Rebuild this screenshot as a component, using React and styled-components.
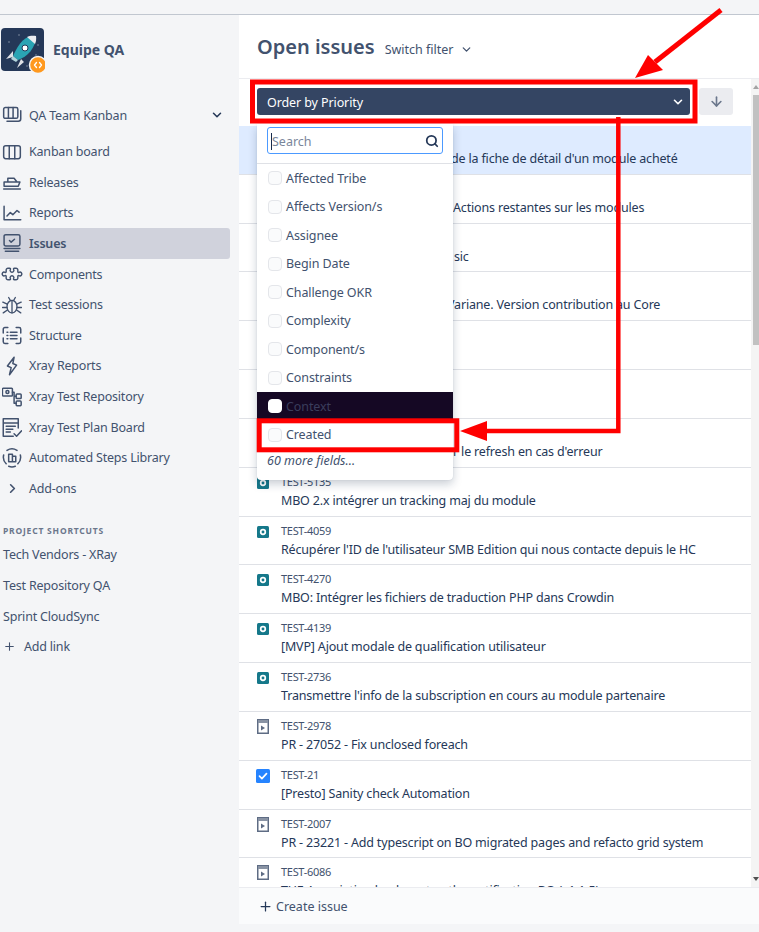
import React from 'react';
import styled, { createGlobalStyle } from 'styled-components';
import { ChevronDown, ChevronRight, ArrowDown, Plus, Search, Puzzle } from 'lucide-react';

const GlobalStyle = createGlobalStyle`
  html, body {
    margin: 0;
    padding: 0;
    background: #f4f5f7;
    font-family: "Noto Sans", "Open Sans", sans-serif;
    color: #172b4d;
  }
  * { box-sizing: border-box; }
`;

const Page = styled.div`
  position: relative;
  width: 759px;
  height: 932px;
  overflow: hidden;
  background: #f4f5f7;
`;

const TopStrip = styled.div`
  height: 15px;
  border-bottom: 1px solid #c1c7d0;
`;

const Columns = styled.div`
  display: grid;
  grid-template-columns: 239px 520px;
  height: 917px;
`;

const Sidebar = styled.aside`
  display: flex;
  flex-direction: column;
  padding-top: 14px;
  color: #42526e;
`;

const ProjectHead = styled.div`
  display: flex;
  align-items: center;
  gap: 8px;
  padding-left: 1px;
  height: 43px;
  margin-bottom: 28px;
`;

const ProjectName = styled.div`
  font-size: 14px;
  font-weight: 700;
  color: #42526e;
  padding-bottom: 2px;
`;

const NavItem = styled.div`
  display: flex;
  align-items: center;
  height: 30.6px;
  width: 230px;
  padding-left: 2px;
  font-size: 12.5px;
  letter-spacing: -0.2px;
  border-radius: 0 3px 3px 0;
  font-weight: ${p => (p.$active ? 600 : 400)};
  background: ${p => (p.$active ? '#d0d2dc' : 'transparent')};
  margin-bottom: ${p => (p.$switcher ? '5.8px' : 0)};
`;

const NavIcon = styled.span`
  display: flex;
  justify-content: center;
  align-items: center;
  width: 20px;
  margin-right: 7px;
  color: #42526e;
  flex: none;
`;

const TiltedPuzzle = styled(Puzzle)`
  transform: rotate(45deg);
`;

const NavLabel = styled.span`
  flex: 1;
`;

const NavCaret = styled.span`
  display: flex;
  margin-right: 6px;
  color: #253858;
`;

const ShortcutTitle = styled.div`
  margin: 21px 0 3px 3px;
  height: 12px;
  line-height: 12px;
  font-size: 8.5px;
  font-weight: 700;
  letter-spacing: 0.8px;
  color: #6b778c;
`;

const ShortcutLink = styled.div`
  display: flex;
  align-items: center;
  height: 30.7px;
  padding-left: 3px;
  font-size: 12.5px;
  letter-spacing: -0.2px;
`;

const AddIcon = styled.span`
  display: flex;
  width: 21px;
  color: #42526e;
`;

const Main = styled.main`
  display: flex;
  flex-direction: column;
  background: #fff;
  height: 909px;
`;

const TitleBar = styled.div`
  display: flex;
  align-items: baseline;
  gap: 10px;
  height: 64px;
  padding: 19px 0 0 18px;
  border-bottom: 1px solid #ebecf0;
  flex: none;
`;

const Title = styled.h1`
  margin: 0;
  font-size: 20px;
  line-height: 26px;
  font-weight: 600;
  letter-spacing: 0;
  color: #42526e;
`;

const FilterSwitch = styled.div`
  display: flex;
  align-items: center;
  gap: 6px;
  font-size: 12.5px;
  color: #42526e;
`;

const Body = styled.div`
  flex: 1;
  min-height: 0;
  display: flex;
`;

const ListColumn = styled.div`
  position: relative;
  flex: 1;
  min-width: 0;
  overflow: hidden;
`;

const Toolbar = styled.div`
  display: flex;
  gap: 9px;
  padding: 9px 18px 0;
  height: 47px;
`;

const OrderSelect = styled.div`
  flex: 1;
  display: flex;
  align-items: center;
  justify-content: space-between;
  height: 27px;
  padding: 1px 5px 0 10px;
  border-radius: 3px;
  background: #344563;
  color: #fff;
  font-size: 12.5px;
  letter-spacing: -0.1px;
`;

const SortButton = styled.div`
  display: flex;
  align-items: center;
  justify-content: center;
  width: 34px;
  height: 27px;
  border-radius: 3px;
  background: #ebecf0;
  color: #6b778c;
`;

const IssueRow = styled.div`
  display: flex;
  height: 48.83px;
  padding: 6px 0 0 18px;
  border-bottom: 1px solid #dfe1e6;
  background: ${p => (p.$selected ? '#deebff' : '#fff')};
`;

const IssueIcon = styled.span`
  display: flex;
  align-items: flex-start;
  width: 24px;
  flex: none;
  padding-top: ${p => p.$top}px;
  margin-left: ${p => (p.$type === 'task' ? -1 : 0)}px;
  margin-right: ${p => (p.$type === 'task' ? 1 : 0)}px;
`;

const IssueText = styled.div`
  min-width: 0;
  white-space: nowrap;
`;

const IssueKey = styled.div`
  font-size: 11px;
  line-height: 16px;
  letter-spacing: -0.3px;
  height: 16px;
  color: #42526e;
`;

const IssueSummary = styled.div`
  font-size: 12.5px;
  line-height: 20px;
  letter-spacing: -0.17px;
  margin-top: 1px;
  margin-left: ${p => p.$indent || 0}px;
  color: #253858;
`;

const FieldMenu = styled.div`
  position: absolute;
  left: 18px;
  top: 45px;
  width: 196px;
  height: 356px;
  background: #fff;
  border-radius: 0 0 4px 4px;
  box-shadow: 0 4px 10px rgba(9, 30, 66, 0.22), 0 0 1px rgba(9, 30, 66, 0.2);
`;

const SearchArea = styled.div`
  height: 40px;
  padding: 3px 10px 0;
  border-bottom: 1px solid #dfe1e6;
`;

const SearchBox = styled.div`
  display: flex;
  align-items: center;
  justify-content: space-between;
  height: 27px;
  padding: 1px 3px 0;
  border: 1px solid #4c9aff;
  border-radius: 3px;
  font-size: 12.5px;
  color: #7a869a;
`;

const Placeholder = styled.span`
  border-left: 1px solid #172b4d;
`;

const FieldOption = styled.div`
  display: flex;
  align-items: center;
  gap: 4px;
  height: 28.5px;
  padding-left: 11px;
  font-size: 12.5px;
  letter-spacing: -0.1px;
  color: ${p => (p.$focused ? '#3a3d5c' : '#42526e')};
  background: ${p => (p.$focused ? '#150824' : 'transparent')};
`;

const Checkbox = styled.span`
  width: 14px;
  height: 14px;
  border-radius: 4px;
  flex: none;
  border: 1px solid ${p => (p.$focused ? '#fff' : '#e4e6ea')};
  background: ${p => (p.$focused ? '#fff' : '#fafbfc')};
`;

const MoreFields = styled.div`
  padding: 3px 0 0 10px;
  font-size: 12.5px;
  font-style: italic;
  color: #42526e;
`;

const Scrollbar = styled.div`
  position: relative;
  width: 8px;
  flex: none;
  background: #f4f4f4;
`;

const ScrollThumb = styled.div`
  margin: 16px 0 0 2px;
  height: 250px;
  background: #c1c1c1;
`;

const ScrollArrow = styled.span`
  position: absolute;
  right: 0;
  width: 0;
  height: 0;
  border-left: 3px solid transparent;
  border-right: 3px solid transparent;
  ${p => (p.$up
    ? 'top: 6px; border-bottom: 4px solid #a3a3a3;'
    : 'bottom: 6px; border-top: 4px solid #505050;')}
`;

const CreateBar = styled.div`
  display: flex;
  align-items: center;
  gap: 3px;
  height: 37px;
  padding-left: 19px;
  background: #fafbfc;
  border-top: 1px solid #ebecf0;
  font-size: 12.5px;
  color: #42526e;
  flex: none;
`;

const Annotations = styled.svg`
  position: absolute;
  left: 0;
  top: 0;
  pointer-events: none;
`;

const Stroke = ({ children, size = 20, width = 1.8 }) => (
  <svg width={size} height={size} viewBox="0 0 24 24" fill="none" stroke="currentColor" strokeWidth={width} strokeLinecap="round" strokeLinejoin="round">
    {children}
  </svg>
);

const BoardsIcon = () => (
  <Stroke>
    <rect x="2" y="3" width="17" height="13" rx="2" />
    <path d="M7.700 3v13M13.300 3v13M22.500 7v9.500a3 3 0 0 1-3 3H6" />
  </Stroke>
);
const BoardIcon = () => (
  <Stroke>
    <rect x="2" y="4.500" width="20" height="15.500" rx="2.500" />
    <path d="M8.700 4.500V20M15.300 4.500V20" />
  </Stroke>
);
const ShipIcon = () => (
  <Stroke>
    <path d="M7 12V7.500h7.500L18 12M2.500 12h19l-2 5h-17z" />
    <path d="M2 20.500h20" />
  </Stroke>
);
const ChartIcon = () => (
  <Stroke>
    <path d="M2.500 4v16h20" />
    <path d="M6 15.500l4-4 3 2.500L18 9l2.500 2" />
  </Stroke>
);
const IssuesIcon = () => (
  <Stroke>
    <rect x="2.500" y="2" width="19" height="13.500" rx="2" />
    <path d="M9 9l2 2 4-3.500M2.500 18.500h19M4 22h16" />
  </Stroke>
);
const BugIcon = () => (
  <Stroke size={22} width={1.6}>
    <ellipse cx="12" cy="14" rx="6" ry="7.500" />
    <path d="M12 6.500V21.500M8 3l2 3.500M16 3l-2 3.500M1 8.500L6.300 11M23 8.500L17.700 11M0.500 15h5.500M23.500 15h-5.500M1.500 21.500l5-3.500M22.500 21.500l-5-3.500" />
  </Stroke>
);
const StructureIcon = () => (
  <Stroke size={21}>
    <path d="M7 2.500H3.500a2 2 0 0 0-2 2V9M1.500 15v4.500a2 2 0 0 0 2 2H7M17 2.500h3.500a2 2 0 0 1 2 2V9M22.500 15v4.500a2 2 0 0 1-2 2H17" />
    <path d="M6 8h1M10 8h8M6 12h1M10 12h8M6 16h1M10 16h8" />
  </Stroke>
);
const BoltIcon = () => (
  <Stroke>
    <path d="M14.500 1.500L6.500 12l4.500 2-2 8.500L17.500 11l-4.500-2z" />
  </Stroke>
);
const RepoIcon = () => (
  <Stroke size={21}>
    <rect x="0.500" y="2" width="12" height="9.500" rx="1" />
    <circle cx="6.500" cy="6.700" r="1.800" />
    <rect x="17" y="9" width="6" height="5.500" rx="1" />
    <rect x="17" y="17.500" width="6" height="5.500" rx="1" />
    <path d="M12.500 7H14.500V20H17M14.500 11.700H17" />
  </Stroke>
);
const PlanIcon = () => (
  <Stroke size={21}>
    <path d="M13.500 22.500H1.500V1.500h18v11M1.500 6.500h18M5 10.500h11M5 14h8M5 17.500h5" />
    <path d="M14.500 19.500l3 3 6-6.500" />
  </Stroke>
);
const StepsIcon = () => (
  <Stroke size={21}>
    <path d="M6 3.500a11 11 0 0 1 12 0M22 9a11 11 0 0 1-3 10.500M5 19.500A11 11 0 0 1 2 9M8 22.500a11 11 0 0 0 8 0" />
    <path d="M8 17V8h4.500v9zM12.500 17v-6.500H16.500V17z" />
  </Stroke>
);

const StoryIcon = () => (
  <svg width="12" height="12" viewBox="0 0 12 12">
    <rect width="12" height="12" rx="1.500" fill="#15788a" />
    <circle cx="6" cy="6" r="2.300" fill="none" stroke="#fff" strokeWidth="1.700" />
  </svg>
);
const ScriptIcon = () => (
  <svg width="12" height="15" viewBox="0 0 12 15">
    <rect x="0.750" y="0.750" width="10.500" height="13.500" fill="#fff" stroke="#5e6c84" strokeWidth="1.500" />
    <rect x="1" y="1" width="10" height="3" fill="#8993a4" />
    <path d="M4 6.500l4 2.500-4 2.500z" fill="#5e6c84" />
  </svg>
);
const TaskIcon = () => (
  <svg width="14" height="14" viewBox="0 0 14 14">
    <rect width="14" height="14" rx="1.500" fill="#2684ff" />
    <path d="M3.500 7.200l2.400 2.400 4.600-5" fill="none" stroke="#fff" strokeWidth="1.700" strokeLinecap="round" strokeLinejoin="round" />
  </svg>
);

const ProjectLogo = () => (
  <svg width="44" height="46" viewBox="0 0 44 46">
    <rect width="43" height="43" rx="4" fill="#253858" />
    <g fill="#5e6c84">
      <circle cx="18" cy="7" r="1" /><circle cx="8" cy="14" r="1" /><circle cx="37" cy="17" r="1" />
      <circle cx="35" cy="27" r="1" /><circle cx="26" cy="38" r="1" />
    </g>
    <path d="M35 8c-9-1-16 4-23 20l5 4c9-3 18-12 18-24z" fill="#2aa4b4" />
    <path d="M35 8c-4-.5-7 0-9 1l8 7c1-2 1.500-5 1-8z" fill="#ebecf0" />
    <path d="M12 23l-7 8 7-2zM20 31l-4 9 7-6z" fill="#dfe1e6" />
    <path d="M12 28l5 4-2 2-5-3z" fill="#b3d4dc" />
    <circle cx="24" cy="20" r="3" fill="#fff" stroke="#253858" strokeWidth="1" />
    <circle cx="37" cy="37" r="8.500" fill="#ff991f" stroke="#f4f5f7" strokeWidth="1.500" />
    <path d="M35.500 34.500L33.500 37l2 2.500M38.500 34.500l2 2.500-2 2.500" fill="none" stroke="#fff" strokeWidth="1.300" strokeLinecap="round" strokeLinejoin="round" />
  </svg>
);

const navItems = [
  { label: 'Kanban board', icon: <BoardIcon /> },
  { label: 'Releases', icon: <ShipIcon /> },
  { label: 'Reports', icon: <ChartIcon /> },
  { label: 'Issues', icon: <IssuesIcon />, active: true },
  { label: 'Components', icon: <TiltedPuzzle size={18} strokeWidth={1.9} /> },
  { label: 'Test sessions', icon: <BugIcon /> },
  { label: 'Structure', icon: <StructureIcon /> },
  { label: 'Xray Reports', icon: <BoltIcon /> },
  { label: 'Xray Test Repository', icon: <RepoIcon /> },
  { label: 'Xray Test Plan Board', icon: <PlanIcon /> },
  { label: 'Automated Steps Library', icon: <StepsIcon /> },
  { label: 'Add-ons', icon: <ChevronRight size={15} strokeWidth={2.6} /> },
];

const shortcuts = ['Tech Vendors - XRay', 'Test Repository QA', 'Sprint CloudSync'];

const fields = ['Affected Tribe', 'Affects Version/s', 'Assignee', 'Begin Date', 'Challenge OKR', 'Complexity', 'Component/s', 'Constraints', 'Context', 'Created'];

// the first rows are mostly behind the open menu, only their tail shows
const issues = [
  { selected: true, text: "de la fiche de détail d'un module acheté", indent: 170 },
  { text: 'Actions restantes sur les modules', indent: 172 },
  { text: 'sic', indent: 173 },
  { text: 'Variane. Version contribution au Core', indent: 166 },
  {},
  {},
  { text: "r le refresh en cas d'erreur", indent: 172 },
  { id: 'TEST-5135', type: 'story', text: 'MBO 2.x intégrer un tracking maj du module' },
  { id: 'TEST-4059', type: 'story', text: "Récupérer l'ID de l'utilisateur SMB Edition qui nous contacte depuis le HC" },
  { id: 'TEST-4270', type: 'story', text: 'MBO: Intégrer les fichiers de traduction PHP dans Crowdin' },
  { id: 'TEST-4139', type: 'story', text: '[MVP] Ajout modale de qualification utilisateur' },
  { id: 'TEST-2736', type: 'story', text: "Transmettre l'info de la subscription en cours au module partenaire" },
  { id: 'TEST-2978', type: 'script', text: 'PR - 27052 - Fix unclosed foreach' },
  { id: 'TEST-21', type: 'task', text: '[Presto] Sanity check Automation' },
  { id: 'TEST-2007', type: 'script', text: 'PR - 23221 - Add typescript on BO migrated pages and refacto grid system' },
  { id: 'TEST-6086', type: 'script', text: 'THE Association leads on top the notification BO (v1.1.5)' },
];

const issueIcons = {
  story: { icon: <StoryIcon />, top: 3 },
  script: { icon: <ScriptIcon />, top: 1 },
  task: { icon: <TaskIcon />, top: 2 },
};

function App() {
  return (
    <Page>
      <GlobalStyle />
      <TopStrip />
      <Columns>
        <Sidebar>
          <ProjectHead>
            <ProjectLogo />
            <ProjectName>Equipe QA</ProjectName>
          </ProjectHead>
          <NavItem $switcher>
            <NavIcon><BoardsIcon /></NavIcon>
            <NavLabel>QA Team Kanban</NavLabel>
            <NavCaret><ChevronDown size={14} strokeWidth={2.6} /></NavCaret>
          </NavItem>
          {navItems.map(item => (
            <NavItem key={item.label} $active={item.active}>
              <NavIcon>{item.icon}</NavIcon>
              <NavLabel>{item.label}</NavLabel>
            </NavItem>
          ))}
          <ShortcutTitle>PROJECT SHORTCUTS</ShortcutTitle>
          {shortcuts.map(name => <ShortcutLink key={name}>{name}</ShortcutLink>)}
          <ShortcutLink>
            <AddIcon><Plus size={13} /></AddIcon>
            Add link
          </ShortcutLink>
        </Sidebar>
        <Main>
          <TitleBar>
            <Title>Open issues</Title>
            <FilterSwitch>Switch filter <ChevronDown size={13} strokeWidth={2.4} /></FilterSwitch>
          </TitleBar>
          <Body>
            <ListColumn>
              <Toolbar>
                <OrderSelect>Order by Priority <ChevronDown size={14} strokeWidth={2.8} /></OrderSelect>
                <SortButton><ArrowDown size={15} strokeWidth={2.6} /></SortButton>
              </Toolbar>
              {issues.map((issue, index) => (
                <IssueRow key={index} $selected={issue.selected}>
                  <IssueIcon $type={issue.type} $top={issue.type ? issueIcons[issue.type].top : 0}>
                    {issue.type && issueIcons[issue.type].icon}
                  </IssueIcon>
                  <IssueText>
                    <IssueKey>{issue.id}</IssueKey>
                    <IssueSummary $indent={issue.indent}>{issue.text}</IssueSummary>
                  </IssueText>
                </IssueRow>
              ))}
              <FieldMenu>
                <SearchArea>
                  <SearchBox>
                    <Placeholder>Search</Placeholder>
                    <Search size={14} strokeWidth={3} color="#253858" />
                  </SearchBox>
                </SearchArea>
                {fields.map(field => (
                  <FieldOption key={field} $focused={field === 'Context'}>
                    <Checkbox $focused={field === 'Context'} />
                    {field}
                  </FieldOption>
                ))}
                <MoreFields>60 more fields...</MoreFields>
              </FieldMenu>
            </ListColumn>
            <Scrollbar>
              <ScrollArrow $up />
              <ScrollThumb />
              <ScrollArrow />
            </Scrollbar>
          </Body>
          <CreateBar><Plus size={15} strokeWidth={2} color="#253858" /> Create issue</CreateBar>
        </Main>
      </Columns>
      <Annotations width="759" height="932" viewBox="0 0 759 932">
        <g fill="none" stroke="#ff0000" strokeWidth="5">
          <rect x="252.500" y="82" width="442.500" height="39" />
          <rect x="259.200" y="420.800" width="197.600" height="29" />
        </g>
        <path d="M618.300 117V431H486" fill="none" stroke="#ff0000" strokeWidth="4.500" />
        <path d="M460 431L487 421V441z" fill="#ff0000" />
        <path d="M721 10L655 62" fill="none" stroke="#ff0000" strokeWidth="5" />
        <path d="M635 78L648 55L663 70z" fill="#ff0000" />
      </Annotations>
    </Page>
  );
}

export default App;
